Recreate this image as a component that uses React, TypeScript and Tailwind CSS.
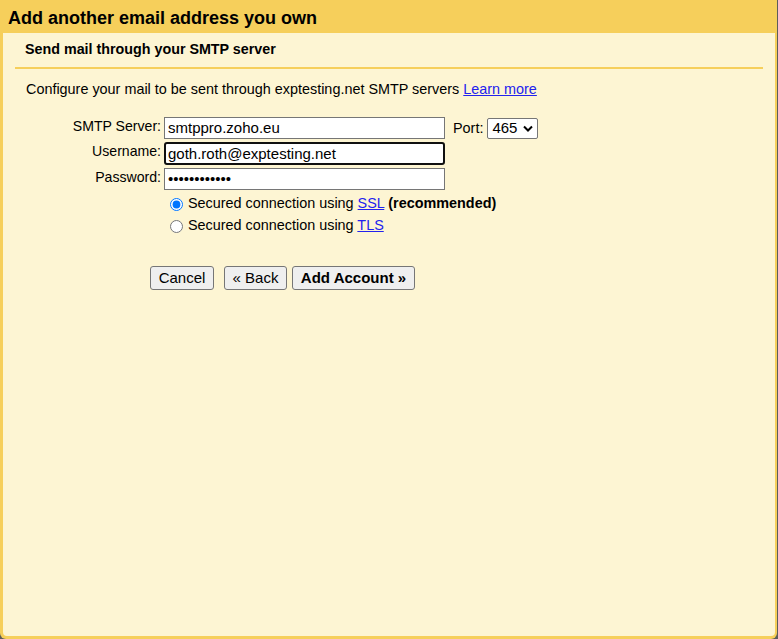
import React from "react";

// 入力欄の共通スタイル
const inputCls =
  "w-[281px] h-[22px] bg-white border border-[#767676] px-[3px] text-[15px] text-black outline-none";

const Label = ({ children }: { children: React.ReactNode }) => (
  <div className="w-[149px] shrink-0 text-right pr-[3px] leading-[18px] text-[14.1px]">{children}</div>
);

export default function App() {
  return (
    <div className="w-[778px] h-[639px] bg-[#5c5c5c] font-['Liberation_Sans',Arial,sans-serif] text-black">
      <div className="w-[777px] h-[639px] bg-[#f6cf5b] rounded-b-[6px] flex flex-col pl-[3px] pr-[2px] pb-[3px]">
        {/* タイトル */}
        <div className="h-[33px] shrink-0 flex items-center pl-[5px] pt-[3px] text-[18px] font-bold">
          Add another email address you own
        </div>

        {/* 本体 */}
        <div className="flex-1 bg-[#fdf5d3] rounded-b-[4px] px-[12px]">
          <div className="h-[34px] flex items-center pl-[10px] text-[14.3px] font-bold">
            Send mail through your SMTP server
          </div>
          <div className="h-[2px] bg-[#f6cf5b]" />

          <div className="mt-[12px] pl-[11px] text-[14.4px] leading-[16px]">
            Configure your mail to be sent through exptesting.net SMTP servers{" "}
            <a href="#" className="text-[#2222ee] underline">Learn more</a>
          </div>

          {/* フォーム */}
          <div className="mt-[20px] flex flex-col">
            <div className="flex items-start">
              <Label>SMTP Server:</Label>
              <input className={inputCls} defaultValue="smtppro.zoho.eu" readOnly />
              <span className="ml-[8px] text-[14.4px] leading-[22px]">Port:</span>
              <div className="ml-[4px] mt-[1px] w-[51px] h-[21px] bg-white border border-[#767676] rounded-[2px] flex items-center justify-between pl-[4px] pr-[4px] text-[15px]">
                <span>465</span>
                <svg width="10" height="7" viewBox="0 0 10 7">
                  <path d="M1 1.5 L5 5.5 L9 1.5" fill="none" stroke="#000" strokeWidth="2" />
                </svg>
              </div>
            </div>

            <div className="flex items-start mt-[3px]">
              <Label>Username:</Label>
              <input
                className="w-[281px] h-[23px] bg-white border-2 border-[#101010] rounded-[3px] px-[2px] text-[15px] outline-none"
                defaultValue="goth.roth@exptesting.net"
                readOnly
              />
            </div>

            <div className="flex items-start mt-[3px]">
              <Label>Password:</Label>
              <input type="password" className={inputCls} defaultValue="abcdefghijkl" readOnly />
            </div>

            {/* 接続方式 */}
            <div className="mt-[3px] pl-[149px] text-[14.4px]">
              <label className="h-[22px] flex items-center">
                <input type="radio" name="sec" defaultChecked className="m-0 ml-[6px] mr-[5px] w-[13px] h-[13px]" />
                <span>
                  Secured connection using <a href="#" className="text-[#2222ee] underline">SSL</a>{" "}
                  <b>(recommended)</b>
                </span>
              </label>
              <label className="h-[22px] flex items-center">
                <input type="radio" name="sec" className="m-0 ml-[6px] mr-[5px] w-[13px] h-[13px]" />
                <span>
                  Secured connection using <a href="#" className="text-[#2222ee] underline">TLS</a>
                </span>
              </label>
            </div>

            {/* ボタン */}
            <div className="mt-[29px] ml-[135px] flex items-center text-[15px]">
              <button className="w-[64px] h-[24px] bg-[#efefef] border border-[#767676] rounded-[3px]">Cancel</button>
              <button className="ml-[10px] w-[63px] h-[24px] bg-[#efefef] border border-[#767676] rounded-[3px]">« Back</button>
              <button className="ml-[5px] w-[123px] h-[24px] bg-[#efefef] border border-[#767676] rounded-[3px] font-bold">
                Add Account »
              </button>
            </div>
          </div>
        </div>
      </div>
    </div>
  );
}
